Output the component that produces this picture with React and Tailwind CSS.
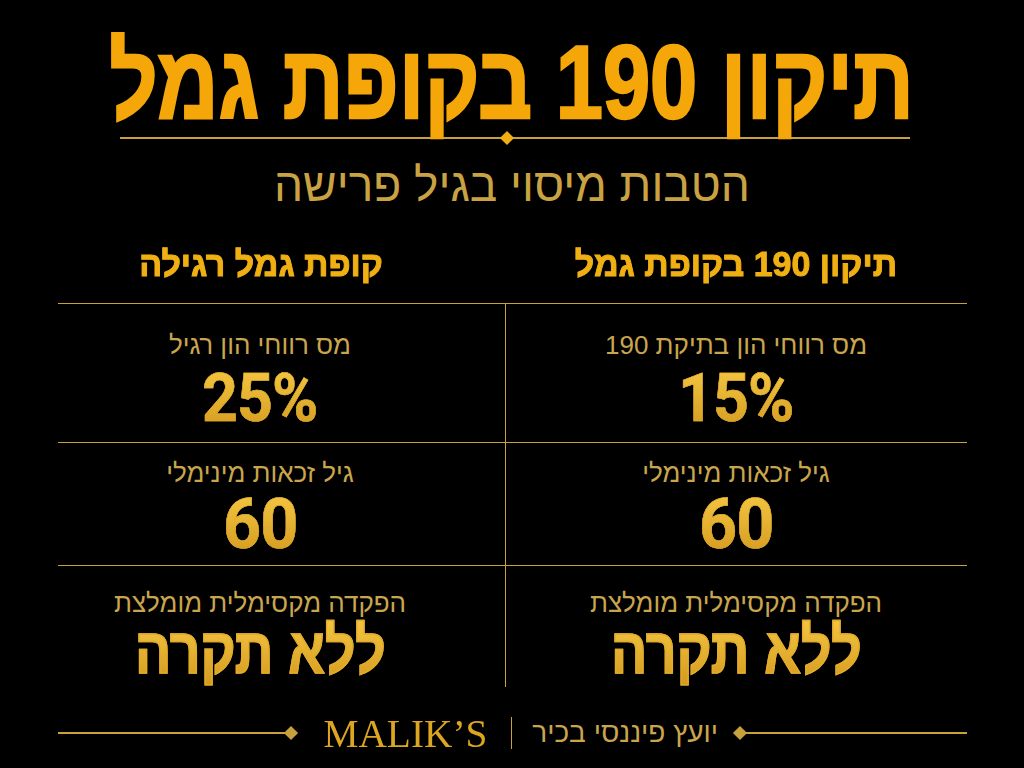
const rows = [
  { label: ['מס רווחי הון בתיקת 190', 'מס רווחי הון רגיל'], value: ['15%', '25%'], h: 'h-[139px]', pad: 'pt-[25px]', gap: 'mt-[4px]', num: 'text-[66px]' },
  { label: ['גיל זכאות מינימלי', 'גיל זכאות מינימלי'], value: ['60', '60'], h: 'h-[123px]', pad: 'pt-[14px]', gap: 'mt-[1px]', num: 'text-[70px]' },
  { label: ['הפקדה מקסימלית מומלצת', 'הפקדה מקסימלית מומלצת'], value: ['ללא תקרה', 'ללא תקרה'], h: 'h-[121px]', pad: 'pt-[21px]', gap: 'mt-[-2px]', num: null },
];

function Diamond({ className = '' }) {
  return <span className={`block w-[10px] h-[10px] rotate-45 ${className}`} />;
}

function Cell({ label, value, row, right }) {
  return (
    <div className={`flex flex-col items-center ${row.pad} ${right ? 'border-l border-[#c9a13c]' : 'pr-[42px]'}`}>
      <div className="text-[26px] leading-[32px] text-[#c9a54e]">{label}</div>
      {row.num ? (
        <div className={`${row.num} ${row.gap} leading-[68px] font-bold font-['Roboto',sans-serif] tracking-[-1px] scale-x-[0.95] bg-gradient-to-b from-[#f6c843] to-[#d49a1c] bg-clip-text text-transparent [-webkit-text-stroke:0.5px_#e4ae2c]`} dir="ltr">{value}</div>
      ) : (
        <div className={`text-[64px] ${row.gap} leading-[68px] font-bold scale-x-[0.84] bg-gradient-to-b from-[#f6c843] to-[#d49a1c] bg-clip-text text-transparent [-webkit-text-stroke:1.5px_#e2ab2a] whitespace-nowrap`}>{value}</div>
      )}
    </div>
  );
}

export default function App() {
  return (
    <div className="w-[1024px] h-[768px] bg-black flex flex-col items-center overflow-hidden font-['Liberation_Sans',sans-serif]" dir="rtl">
      {/* Title */}
      <h1 className="pt-[30px] h-[134px] text-[104px] leading-[104px] font-bold text-[#f5a70a] scale-x-[0.815] whitespace-nowrap [-webkit-text-stroke:2.5px_#f5a70a]">
        תיקון 190 בקופת גמל
      </h1>

      {/* Divider */}
      <div className="w-[790px] flex items-center ml-[6px] mt-[-1px]" dir="ltr">
        <div className="w-[383px] h-[1.5px] bg-[#c9a13c]" />
        <Diamond className="bg-[#f0ad14] mx-[-1px]" />
        <div className="flex-1 h-[1.5px] bg-[#c9a13c]" />
      </div>

      {/* Subtitle */}
      <div className="mt-[17px] text-[46px] leading-[50px] text-[#c9a343] whitespace-nowrap">
        הטבות מיסוי בגיל פרישה
      </div>

      {/* Table */}
      <div className="w-[909px] mt-[23px]">
        <div className="grid grid-cols-[462px_447px] h-[71px] items-center border-b border-[#c9a13c] pb-[8px]">
          <div className="text-center text-[35px] font-bold text-[#f0b014] [-webkit-text-stroke:1px_#f0b014] scale-x-[0.97]">תיקון 190 בקופת גמל</div>
          <div className="text-center text-[35px] font-bold text-[#f0b014] [-webkit-text-stroke:1px_#f0b014] pr-[42px] scale-x-[0.97]">קופת גמל רגילה</div>
        </div>
        {rows.map((r, i) => (
          <div key={i} className={`grid grid-cols-[462px_447px] ${r.h} ${i < 2 ? 'border-b border-[#c9a13c]' : ''}`}>
            <Cell label={r.label[0]} value={r.value[0]} row={r} right />
            <Cell label={r.label[1]} value={r.value[1]} row={r} />
          </div>
        ))}
      </div>

      {/* Footer */}
      <div className="w-[909px] mt-[24px] flex items-center" dir="ltr">
        <div className="w-[228px] h-[1.5px] bg-[#c9a13c]" />
        <Diamond className="bg-[#c9a13c] w-[9px] h-[9px]" />
        <div className="flex-1 flex items-center justify-center gap-[20px] pl-[8px]">
          <span className="font-['Liberation_Serif',serif] text-[41px] leading-[44px] text-[#dca621] scale-x-[0.96]">MALIK’S</span>
          <span className="w-[1.5px] h-[32px] bg-[#c9a13c]" />
          <span className="text-[28px] text-[#c9a54e]" dir="rtl">יועץ פיננסי בכיר</span>
        </div>
        <Diamond className="bg-[#c9a13c] w-[9px] h-[9px]" />
        <div className="w-[222px] h-[1.5px] bg-[#c9a13c]" />
      </div>
    </div>
  );
}
